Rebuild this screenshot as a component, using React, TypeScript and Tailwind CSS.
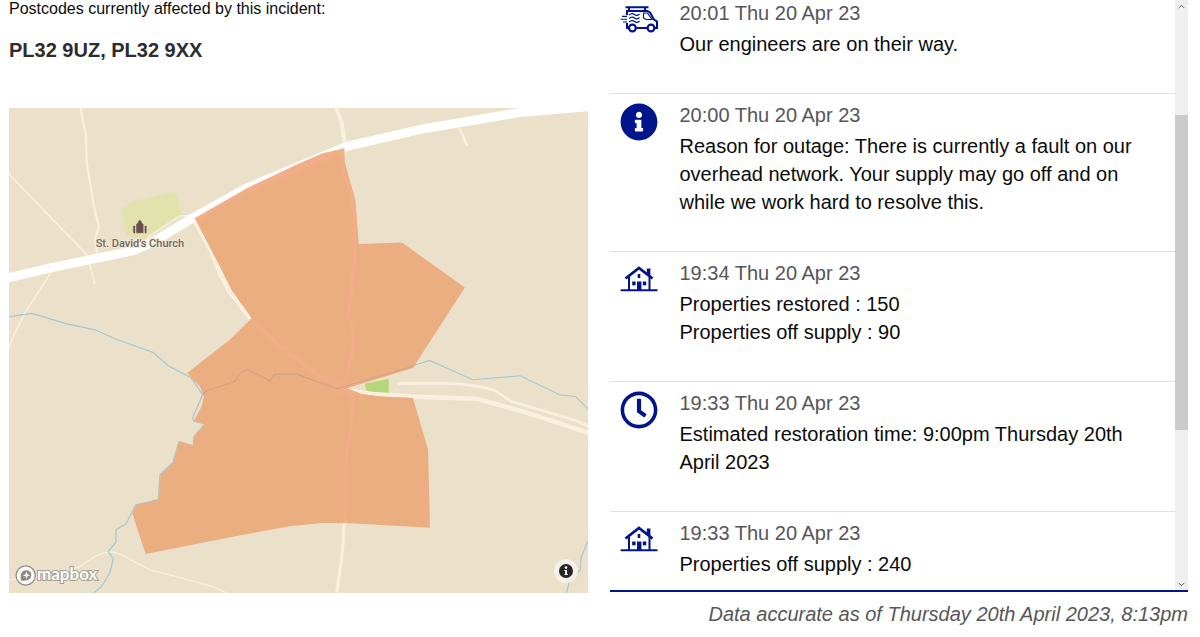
import type { ReactNode } from 'react'
import { FaInfoCircle, FaRegClock } from 'react-icons/fa'
import { IoChevronDown, IoChevronUp } from 'react-icons/io5'

type UpdateKind = 'van' | 'info' | 'house' | 'clock'

interface Update {
  kind: UpdateKind
  time: string
  lines: string[]
}

const updates: Update[] = [
  { kind: 'van', time: '20:01 Thu 20 Apr 23', lines: ['Our engineers are on their way.'] },
  {
    kind: 'info',
    time: '20:00 Thu 20 Apr 23',
    lines: [
      'Reason for outage: There is currently a fault on our overhead network. Your supply may go off and on while we work hard to resolve this.',
    ],
  },
  {
    kind: 'house',
    time: '19:34 Thu 20 Apr 23',
    lines: ['Properties restored : 150', 'Properties off supply : 90'],
  },
  {
    kind: 'clock',
    time: '19:33 Thu 20 Apr 23',
    lines: ['Estimated restoration time: 9:00pm Thursday 20th April 2023'],
  },
  { kind: 'house', time: '19:33 Thu 20 Apr 23', lines: ['Properties off supply : 240'] },
]

function VanIcon() {
  return (
    <svg viewBox="0 0 38 38" className="size-full" fill="none" stroke="currentColor" strokeWidth="2" aria-hidden="true">
      <path d="M5.5 6.3H28.5M9 6.3V10M25 6.3V10" />
      <path d="M7 14V10H27.5L30 11.5L34 18.5L37 20.5V27H35M27 27H16.5M8.5 27H7V22" />
      <path d="M23.5 12H27.5L32 18.5H26L23.5 17Z" strokeWidth="1.2" />
      <circle cx="12.4" cy="27" r="3.4" strokeWidth="2.2" />
      <circle cx="31" cy="27" r="3.4" strokeWidth="2.2" />
      <path d="M2 15.4H7M.5 18.2H7M3 21H7" strokeWidth="1.1" />
      <path d="M9 14q3-2.5 5.5-.5t5-.5M9 17.5q3-2.5 5.5-.5t5-.5M9 21q3-2.5 5.5-.5t5-.5" strokeWidth="1.1" />
    </svg>
  )
}

function HouseIcon() {
  return (
    <svg viewBox="0 0 38 38" className="size-full" fill="none" stroke="currentColor" strokeWidth="2" aria-hidden="true">
      <path d="M.7 29.3H37.5" strokeWidth="2" />
      <path d="M5.5 17.5L19 7L32.5 17.5" strokeWidth="2.8" />
      <path d="M9 16V29M29.5 16V29" />
      <path d="M26.8 7.5H30.4V15L26.8 12Z" fill="currentColor" stroke="none" />
      <g fill="currentColor" stroke="none">
        <rect x="17.7" y="13" width="2.6" height="4" />
        <rect x="12.2" y="20.5" width="3.4" height="3.8" />
        <rect x="22.8" y="20.5" width="3.4" height="3.8" />
        <rect x="17" y="20.5" width="4.4" height="8.5" />
      </g>
    </svg>
  )
}

const icons: Record<UpdateKind, ReactNode> = {
  van: <VanIcon />,
  info: <FaInfoCircle className="size-full" />,
  house: <HouseIcon />,
  clock: <FaRegClock className="size-full" />,
}

const area =
  'M344.5 148.5L345 162L355.7 200L359 244L402.3 242.7L465.3 287.7L425 350L413.3 368.3L347.3 388.5L361.7 394.3L380 396.7L413.3 398.3L428.5 450L430.3 528L345 523.3L323 523.3L290 526.7L233 537L145.7 554.3L132.3 513.3L136.7 505L158.3 500L160.7 475L173.3 462.7L179.3 441.7L194 446L194.3 436.7L205 425L194 421L201.7 406.7L204 396.7L200 386.7L187.3 373.3L230 340L252 318.5L232 290.7L223.7 274L195 218.3L247 188.5L300 163.3L323 153.5Z'
const mainRoad = 'M5 278.7L55 267L133 251L155 241L193 218L247 188L300 166L347 146.5L423 129L520 112.5L592 106.5'
const northRoad = 'M335 104L341.7 121.7L345 142L342 152L342 166.7L351 190L355 216.7L355 260L348.5 313.3L354 336.7L353 347L345 386'
const southRoad = 'M353.3 393L352.7 420L346.5 456.7L346 513L344.3 527L342.7 553L336.7 595'
const eastRoad = 'M249.5 317.5L277 343L316.7 375L350 391L373 394.3L413 397L477 399L523 411.7L592 434'

function OutageMap() {
  return (
    <div className="relative">
      <svg viewBox="9 108 579 485" className="block w-full bg-[#ebe1ca]" role="img" aria-label="Map of the affected area">
        <defs>
          <clipPath id="area">
            <path d={area} />
          </clipPath>
        </defs>

        {/* parks */}
        <path d="M121.5 209L131.7 201.7L173 192Q176 192 176.5 194L182 215L147 239L127 236Z" fill="#e2e3ac" />
        <path d="M365 384L389 379V393.5L367 392Z" fill="#b5d77a" />

        {/* minor roads */}
        <g fill="none" stroke="#f9f0de" strokeWidth="1.6" strokeLinejoin="round">
          <path d="M80 106L86 135L86.7 162L93.3 203L99 227L95 240L97 253" strokeWidth="2.2" />
          <path d="M5 170L87 255L95 284" />
          <path d="M52 271L25 313L13 337L8 352" />
          <path d="M5 581L50 576L80 567Q98 554 105 553Q115 551 127 558L150 570L180 578L213 587L228 594" strokeWidth="1.4" />
          <path d="M147 238L180 216H188" />
          <path d="M460 128L467.5 146" strokeWidth="2.4" />
          <path d="M398 384L436.7 383.3Q480 384 497 391.7L511.7 401.7L577 421L592 428" strokeWidth="2.8" />
          <path d={northRoad} strokeWidth="4" />
          <path d={southRoad} strokeWidth="3" />
          <path d={eastRoad} strokeWidth="4.5" />
          <path d="M194 219L211.5 251L221.5 276L230 291.5L250.500 318" strokeWidth="5" />
        </g>

        {/* rivers */}
        <g fill="none" stroke="#a3c7d2" strokeWidth="1.2">
          <path d="M5 317.5L31.7 313.5L66.7 324L95 330L115 339L153.3 352.7L168.3 366L191.7 378.3L202.7 395L192.7 418.3L194 421.5L205 424L194 437L193.5 446L179 442L173 462.7L160 475L158.5 500L136 505L126 524.5L116 530L116 542.5L108.3 552L113.3 559L110 573L101.7 587L93 594" />
          <path d="M413 366L430 360.7L473 380L520.7 376L560 395L576 396.7L590 411" />
          <path d="M590 538L581.5 558L581 570L570 582L566.5 595" />
        </g>

        <path d={mainRoad} fill="none" stroke="#ffffff" strokeWidth="9" strokeLinejoin="round" />

        {/* affected area, with the roads showing through */}
        <path d={area} fill="#ebae80" />
        <g clipPath="url(#area)" fill="none" stroke="#f1ae89" strokeLinejoin="round">
          <path d={mainRoad} strokeWidth="9" />
          <path d={northRoad} strokeWidth="4" />
          <path d={southRoad} strokeWidth="3" />
          <path d={eastRoad} strokeWidth="4.5" />
          <path d="M318 386L352 396" strokeWidth="1.6" />
          <path d="M202.7 395L207 391L235 381.7L241 373L248.3 370L270 381L275 374.5L297 374.3L337 389L413 366.5" stroke="#d3a184" strokeWidth="1.2" />
        </g>

        {/* church */}
        <g fill="#6b4f4a" stroke="#f3ecd8" strokeWidth="0.6">
          <path d="M136 233.5V224.5L138 222.500V221.5L140 219.5L142 221.5V222.500L144 224.5V233.5Z" />
          <rect x="133" y="225.500" width="2.6" height="8" rx="1" />
          <rect x="144.4" y="225.500" width="2.6" height="8" rx="1" />
        </g>
        <text
          x="140"
          y="247"
          textAnchor="middle"
          className="fill-[#756662] stroke-[#efe8d5] stroke-2 font-[Roboto,sans-serif] text-[11px] font-medium [paint-order:stroke]"
        >
          St. David’s Church
        </text>
      </svg>

      <a href="#mapbox" aria-label="Mapbox homepage" className="absolute bottom-1.5 left-1.5">
        <svg viewBox="0 0 86 23" className="h-[23px] w-[86px]">
          <circle cx="10.7" cy="11.5" r="9.6" fill="#ffffff" stroke="#8f8b80" strokeWidth="1.2" />
          <path d="M6 16.5C4.500 9 7.500 6.300 11.500 6.300C14.500 6.300 16.300 8.500 16.300 11C16.300 15 13 17.500 6 16.500Z" fill="#8f8b80" />
          <path d="M11.500 7.500L12.500 10.200L15.200 11.200L12.500 12.200L11.500 14.900L10.500 12.200L7.800 11.200L10.500 10.200Z" fill="#ffffff" />
          <text
            x="22"
            y="16"
            className="fill-white stroke-[#a19c90] stroke-2 font-[Lato,sans-serif] text-[17px] font-bold [paint-order:stroke]"
          >
            mapbox
          </text>
        </svg>
      </a>
      <button
        type="button"
        aria-label="Map attribution"
        className="absolute right-2.5 bottom-2.5 flex size-6 items-center justify-center rounded-full bg-[#f6f1e6]"
      >
        <svg viewBox="0 0 14 14" className="size-3.5" aria-hidden="true">
          <circle cx="7" cy="7" r="7" fill="#262626" />
          <circle cx="7" cy="3.600" r="1.300" fill="#fff" />
          <path d="M5.400 6H8V10H8.800V11H5.400V10H6.200V7H5.400Z" fill="#fff" />
        </svg>
      </button>
    </div>
  )
}

function UpdateRow({ update }: { update: Update }) {
  return (
    <li className="flex gap-[22px] border-t border-[#dee2e6] px-[10px] pt-[7px] pb-[35px] text-xl leading-[28px] last:pb-3">
      <div className="mt-0.5 size-[38px] shrink-0 text-[#00148c]">{icons[update.kind]}</div>
      <div>
        <p className="mb-[3px] text-[#56565a]">{update.time}</p>
        {update.lines.map((line) => (
          <p key={line} className="text-[#0b0c0c]">
            {line}
          </p>
        ))}
      </div>
    </li>
  )
}

function ScrollTrack() {
  return (
    <div className="flex w-[13px] shrink-0 flex-col items-center bg-[#efefef] text-[9px] text-[#505050]" aria-hidden="true">
      <div className="flex h-3 items-center">
        <IoChevronUp strokeWidth={40} />
      </div>
      <div className="flex-[103]" />
      <div className="w-full flex-[315] bg-[#cbcbcb]" />
      <div className="flex-[148]" />
      <div className="flex h-3 items-center">
        <IoChevronDown strokeWidth={40} />
      </div>
    </div>
  )
}

export default function App() {
  return (
    <main className="grid grid-cols-2 gap-[22px] bg-white pr-3 pl-[9px] font-['Liberation_Sans',Arial,sans-serif]">
      <section>
        <p className="text-base leading-[18px] text-[#0b0c0c]">Postcodes currently affected by this incident:</p>
        <h2 className="mt-[18px] mb-[44px] text-xl leading-[28px] font-bold text-[#2b2d2f]">PL32 9UZ, PL32 9XX</h2>
        <OutageMap />
      </section>

      <section>
        <div className="flex overflow-hidden border-b-2 border-[#00148c]">
          <ul className="-mt-[9px] grow">
            {updates.map((update, index) => (
              <UpdateRow key={index} update={update} />
            ))}
          </ul>
          <ScrollTrack />
        </div>
        <p className="mt-2 text-right text-xl leading-[28px] text-[#56565a] italic">
          Data accurate as of Thursday 20th April 2023, 8:13pm
        </p>
      </section>
    </main>
  )
}
